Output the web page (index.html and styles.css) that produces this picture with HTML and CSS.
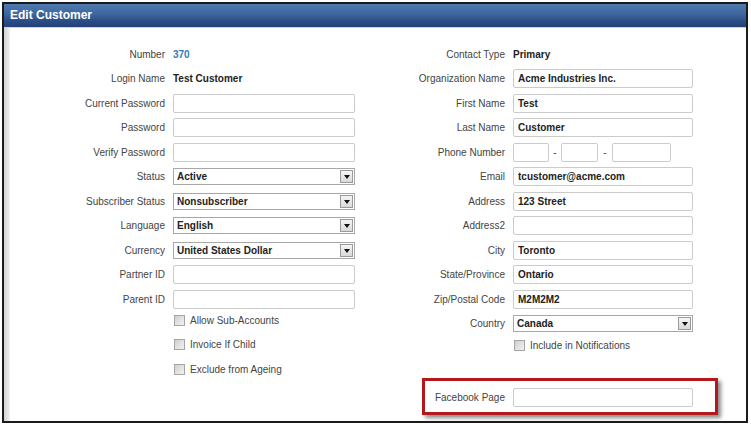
FILE: index.html
```html
<!DOCTYPE html>
<html>
<head>
<meta charset="utf-8">
<link rel="stylesheet" href="styles.css">
</head>
<body>
<div class="window">
  <div class="titlebar">Edit Customer</div>
  <div class="body">
    <div class="strip"></div>
    <div class="cols">
      <div class="col col-left">
        <div class="row"><span class="label">Number</span><span class="value link">370</span></div>
        <div class="row"><span class="label">Login Name</span><span class="value">Test Customer</span></div>
        <div class="row"><span class="label">Current Password</span><input class="input" type="text" value=""></div>
        <div class="row"><span class="label">Password</span><input class="input" type="text" value=""></div>
        <div class="row"><span class="label">Verify Password</span><input class="input" type="text" value=""></div>
        <div class="row"><span class="label">Status</span><div class="select"><span>Active</span><span class="arrow"><span class="tri"></span></span></div></div>
        <div class="row"><span class="label">Subscriber Status</span><div class="select"><span>Nonsubscriber</span><span class="arrow"><span class="tri"></span></span></div></div>
        <div class="row"><span class="label">Language</span><div class="select"><span>English</span><span class="arrow"><span class="tri"></span></span></div></div>
        <div class="row"><span class="label">Currency</span><div class="select"><span>United States Dollar</span><span class="arrow"><span class="tri"></span></span></div></div>
        <div class="row"><span class="label">Partner ID</span><input class="input" type="text" value=""></div>
        <div class="row"><span class="label">Parent ID</span><input class="input" type="text" value=""></div>
        <div class="row check first-check"><span class="cb"></span><span>Allow Sub-Accounts</span></div>
        <div class="row check"><span class="cb"></span><span>Invoice If Child</span></div>
        <div class="row check"><span class="cb"></span><span>Exclude from Ageing</span></div>
      </div>
      <div class="col col-right">
        <div class="row"><span class="label">Contact Type</span><span class="value">Primary</span></div>
        <div class="row"><span class="label">Organization Name</span><input class="input" type="text" value="Acme Industries Inc."></div>
        <div class="row"><span class="label">First Name</span><input class="input" type="text" value="Test"></div>
        <div class="row"><span class="label">Last Name</span><input class="input" type="text" value="Customer"></div>
        <div class="row"><span class="label">Phone Number</span><input class="input ph1" type="text" value=""><span class="dash d1">-</span><input class="input ph2" type="text" value=""><span class="dash d2">-</span><input class="input ph3" type="text" value=""></div>
        <div class="row"><span class="label">Email</span><input class="input" type="text" value="tcustomer@acme.com"></div>
        <div class="row"><span class="label">Address</span><input class="input" type="text" value="123 Street"></div>
        <div class="row"><span class="label">Address2</span><input class="input" type="text" value=""></div>
        <div class="row"><span class="label">City</span><input class="input" type="text" value="Toronto"></div>
        <div class="row"><span class="label">State/Province</span><input class="input" type="text" value="Ontario"></div>
        <div class="row"><span class="label">Zip/Postal Code</span><input class="input" type="text" value="M2M2M2"></div>
        <div class="row"><span class="label">Country</span><div class="select"><span>Canada</span><span class="arrow"><span class="tri"></span></span></div></div>
        <div class="row check first-check"><span class="cb"></span><span>Include in Notifications</span></div>
        <div class="highlight"><span class="label">Facebook Page</span><input class="input" type="text" value=""></div>
      </div>
    </div>
  </div>
</div>
</body>
</html>
```
FILE: styles.css
```css
html, body {
  margin: 0;
  padding: 0;
  background: #ffffff;
}
body {
  font-family: "Liberation Sans", Arial, sans-serif;
  font-size: 10px;
  color: #444444;
}
.window {
  margin: 2px;
  width: 746px;
  height: 421px;
  box-sizing: border-box;
  border: 2px solid #1b1b1b;
  display: flex;
  flex-direction: column;
}
.titlebar {
  height: 23px;
  flex: none;
  background: linear-gradient(#4f7aaf, #3e669d 45%, #2a4c84 75%, #23417a);
  color: #ffffff;
  font-weight: bold;
  font-size: 12px;
  line-height: 23px;
  padding-left: 6px;
  border-bottom: 1px solid #c6d5ea;
}
.body {
  flex: 1;
  display: flex;
  min-height: 0;
}
.strip {
  width: 6px;
  flex: none;
  background: linear-gradient(to right, #d2d2d2, #e4e4e4 60%, #f3f3f3);
}
.cols {
  flex: 1;
  display: flex;
  padding-top: 13.75px;
}
.col {
  display: flex;
  flex-direction: column;
}
.col-left {
  width: 360px;
  flex: none;
}
.col-right {
  flex: 1;
}
.row {
  display: flex;
  align-items: center;
  height: 24.5px;
  flex: none;
}
.label {
  flex: none;
  box-sizing: border-box;
  text-align: right;
  padding-right: 8px;
  white-space: nowrap;
}
.col-left .label {
  width: 163px;
}
.col-right .label {
  width: 143px;
}
.value {
  font-weight: bold;
  color: #222222;
}
.value.link {
  color: #2f7cba;
}
.input {
  box-sizing: border-box;
  height: 19px;
  margin: 0;
  border: 1px solid #cbcbcb;
  border-radius: 2px;
  padding: 0 4px;
  font-family: "Liberation Sans", Arial, sans-serif;
  font-size: 10px;
  font-weight: bold;
  color: #222222;
  background: #ffffff;
  outline: none;
}
.col-left .input {
  width: 182px;
}
.col-right .input {
  width: 180px;
}
.col-right .input.ph1 {
  width: 36px;
}
.col-right .input.ph2 {
  width: 37px;
}
.col-right .input.ph3 {
  width: 59px;
}
.dash {
  text-align: center;
  color: #444444;
}
.dash.d1 {
  width: 12px;
}
.dash.d2 {
  width: 14px;
}
.select {
  box-sizing: border-box;
  height: 17px;
  border: 1px solid #a8a8a8;
  display: flex;
  align-items: center;
  padding-left: 3px;
  font-weight: bold;
  color: #222222;
  background: #ffffff;
}
.col-left .select {
  width: 182px;
}
.col-right .select {
  width: 180px;
}
.arrow {
  margin-left: auto;
  margin-right: 1px;
  width: 13px;
  height: 13px;
  box-sizing: border-box;
  border: 1px solid #9a9a9a;
  background: linear-gradient(#f6f6f6, #d9d9d9);
  display: flex;
  align-items: center;
  justify-content: center;
}
.tri {
  width: 0;
  height: 0;
  border-left: 3.5px solid transparent;
  border-right: 3.5px solid transparent;
  border-top: 4px solid #111111;
  margin-top: 1px;
}
.check {
  color: #444444;
}
.col-left .check {
  padding-left: 164px;
}
.col-right .check {
  padding-left: 144px;
}
.first-check {
  margin-top: -3.5px;
}
.col-right .first-check {
  margin-top: -3px;
}
.cb {
  width: 11px;
  height: 11px;
  box-sizing: border-box;
  border: 1px solid #a5a5a5;
  background: linear-gradient(135deg, #d0d0d0, #f2f2f2);
  margin-right: 5px;
  flex: none;
}
.highlight {
  margin-top: 20.5px;
  margin-left: 52px;
  width: 296px;
  box-sizing: border-box;
  border: 3px solid #b3191c;
  padding: 7px 0 5px;
  box-shadow: 3px 3px 4px rgba(0, 0, 0, 0.45);
  display: flex;
  align-items: center;
}
.col-right .highlight .label {
  width: 88px;
}
```
